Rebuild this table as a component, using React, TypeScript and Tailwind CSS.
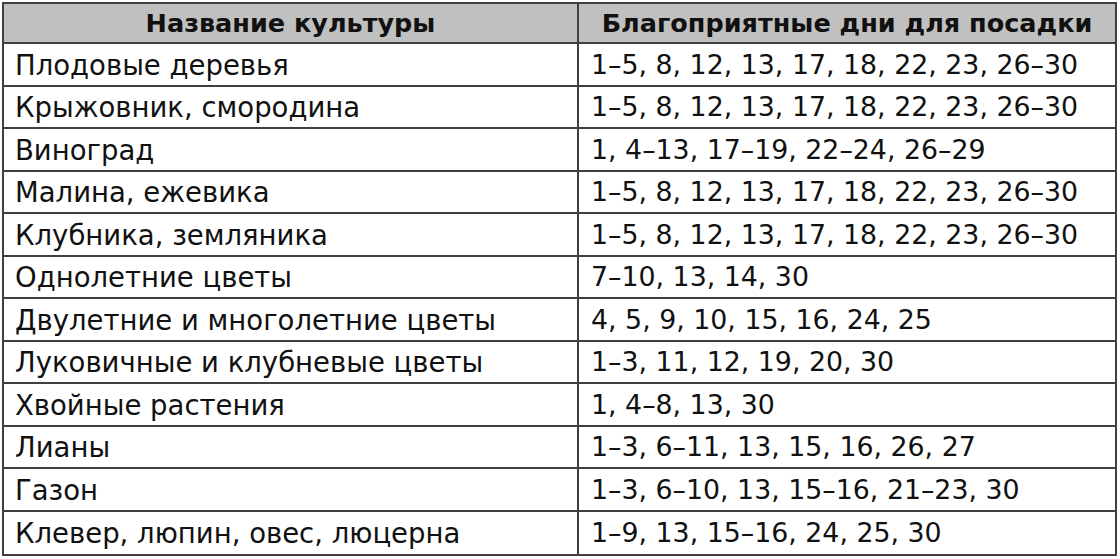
import React from "react";

const rows: [string, string][] = [
  ["Плодовые деревья", "1–5, 8, 12, 13, 17, 18, 22, 23, 26–30"],
  ["Крыжовник, смородина", "1–5, 8, 12, 13, 17, 18, 22, 23, 26–30"],
  ["Виноград", "1, 4–13, 17–19, 22–24, 26–29"],
  ["Малина, ежевика", "1–5, 8, 12, 13, 17, 18, 22, 23, 26–30"],
  ["Клубника, земляника", "1–5, 8, 12, 13, 17, 18, 22, 23, 26–30"],
  ["Однолетние цветы", "7–10, 13, 14, 30"],
  ["Двулетние и многолетние цветы", "4, 5, 9, 10, 15, 16, 24, 25"],
  ["Луковичные и клубневые цветы", "1–3, 11, 12, 19, 20, 30"],
  ["Хвойные растения", "1, 4–8, 13, 30"],
  ["Лианы", "1–3, 6–11, 13, 15, 16, 26, 27"],
  ["Газон", "1–3, 6–10, 13, 15–16, 21–23, 30"],
  ["Клевер, люпин, овес, люцерна", "1–9, 13, 15–16, 24, 25, 30"],
];

export default function App() {
  return (
    <div className="w-[1120px] h-[559px] bg-white pt-[2px] pl-[2px] font-['DejaVu_Sans',sans-serif] text-[#111]">
      <div className="w-[1115px] border-2 border-[#404040]">
        <div className="grid grid-cols-[575px_1fr] h-[40px] bg-[#c0c0c0] border-b-2 border-[#404040] font-bold text-[25.5px] leading-none">
          <div className="flex items-center justify-center border-r-2 border-[#404040] pt-[1px]">Название культуры</div>
          <div className="flex items-center justify-center pt-[1px]">Благоприятные дни для посадки</div>
        </div>
        {rows.map(([a, b], i) => (
          <div
            key={i}
            className={
              "grid grid-cols-[575px_1fr] h-[42.5px] leading-none " +
              (i < rows.length - 1 ? "border-b-2 border-[#404040]" : "")
            }
          >
            <div className="flex items-center pl-[11px] pt-[2px] border-r-2 border-[#404040] text-[27.5px]">{a}</div>
            <div className="flex items-center pl-[12px] pt-[2px] text-[26.8px]">{b}</div>
          </div>
        ))}
      </div>
    </div>
  );
}
